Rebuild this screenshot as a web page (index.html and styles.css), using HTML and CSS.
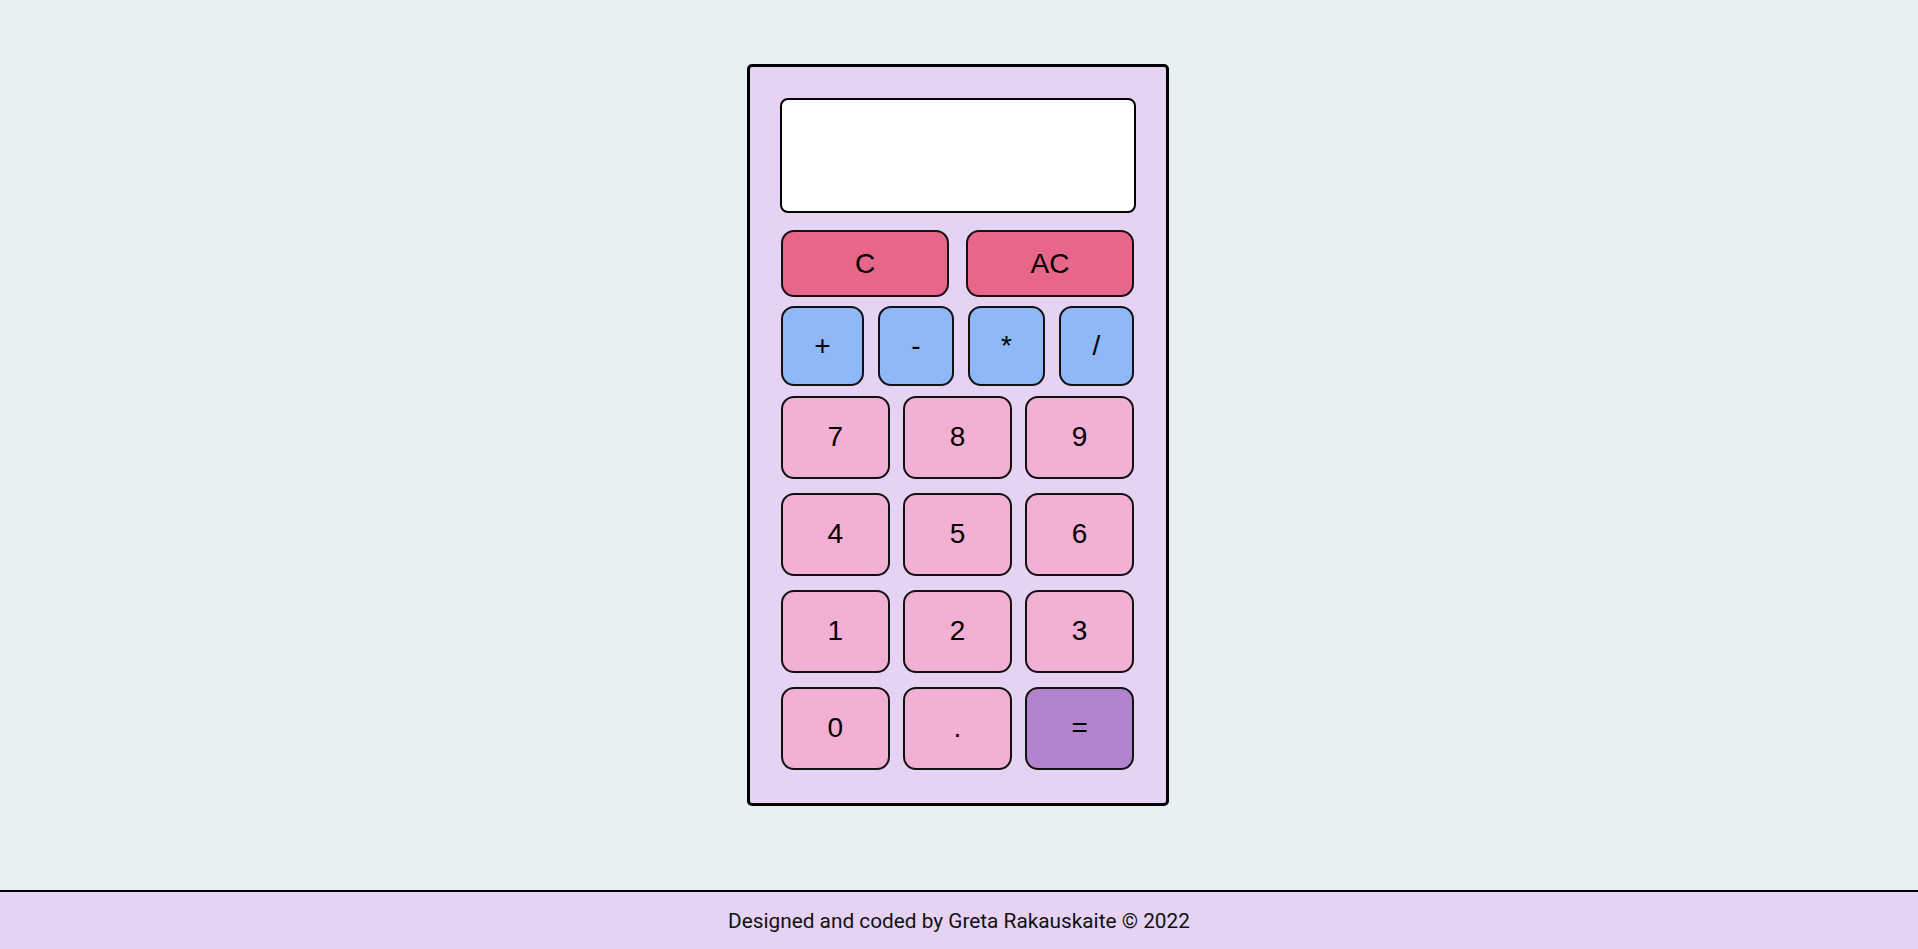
FILE: index.html
```html
<!DOCTYPE html>
<html lang="en">
<head>
<meta charset="utf-8">
<title>Calculator</title>
<link rel="stylesheet" href="styles.css">
</head>
<body>
<main class="page">
  <div class="calculator">
    <div class="display"></div>
    <div class="keys">
      <div class="row row-clear">
        <button class="key key-clear">C</button>
        <button class="key key-clear">AC</button>
      </div>
      <div class="row row-ops">
        <button class="key key-op">+</button>
        <button class="key key-op">-</button>
        <button class="key key-op">*</button>
        <button class="key key-op">/</button>
      </div>
      <div class="grid-digits">
        <button class="key key-num">7</button>
        <button class="key key-num">8</button>
        <button class="key key-num">9</button>
        <button class="key key-num">4</button>
        <button class="key key-num">5</button>
        <button class="key key-num">6</button>
        <button class="key key-num">1</button>
        <button class="key key-num">2</button>
        <button class="key key-num">3</button>
        <button class="key key-num">0</button>
        <button class="key key-num">.</button>
        <button class="key key-eq">=</button>
      </div>
    </div>
  </div>
</main>
<footer class="footer">
  <p class="footer-text">Designed and coded by Greta Rakauskaite © 2022</p>
</footer>
</body>
</html>
```
FILE: styles.css
```css
* { box-sizing: border-box; }

html, body {
  margin: 0;
  padding: 0;
}

body {
  height: 949px;
  display: flex;
  flex-direction: column;
  background: #e8f0f3;
  font-family: "Liberation Sans", Arial, sans-serif;
  color: #000;
}

.page {
  flex: 1 1 auto;
}

.calculator {
  width: 422px;
  margin: 64px 0 0 calc(50% - 212px);
  background: #e6d3f4;
  border: 3px solid #000;
  border-radius: 5px;
  padding: 31px 30px 33px 30px;
}

.display {
  height: 115px;
  background: #fff;
  border: 2px solid #000;
  border-radius: 8px;
}

.keys {
  padding: 0 2px 0 1px;
}

.row {
  display: grid;
}

.row-clear {
  margin-top: 17px;
  grid-template-columns: 1fr 1fr;
  column-gap: 17px;
}

.row-ops {
  margin-top: 9px;
  grid-template-columns: 83px 76px 77px 75px;
  column-gap: 14px;
}

.grid-digits {
  margin-top: 10px;
  display: grid;
  grid-template-columns: repeat(3, 1fr);
  grid-auto-rows: 82.5px;
  column-gap: 13.5px;
  row-gap: 14.5px;
}

.key {
  font-family: "Liberation Sans", Arial, sans-serif;
  font-size: 28px;
  color: #000;
  border: 2px solid #111;
  border-radius: 13px;
  padding: 0;
  margin: 0;
  cursor: pointer;
}

.key-clear {
  height: 67px;
  background: #e7668a;
}

.key-op {
  height: 80px;
  background: #8eb8f8;
}

.key-num {
  background: #f2b0d4;
}

.key-eq {
  background: #b083cc;
}

.footer {
  height: 59px;
  flex: 0 0 auto;
  background: #e6d3f4;
  border-top: 2px solid #000;
  display: flex;
  align-items: center;
  justify-content: center;
}

.footer-text {
  margin: 0;
  font-family: Roboto, "Noto Sans", sans-serif;
  font-size: 20.8px;
  color: #111;
}
```
